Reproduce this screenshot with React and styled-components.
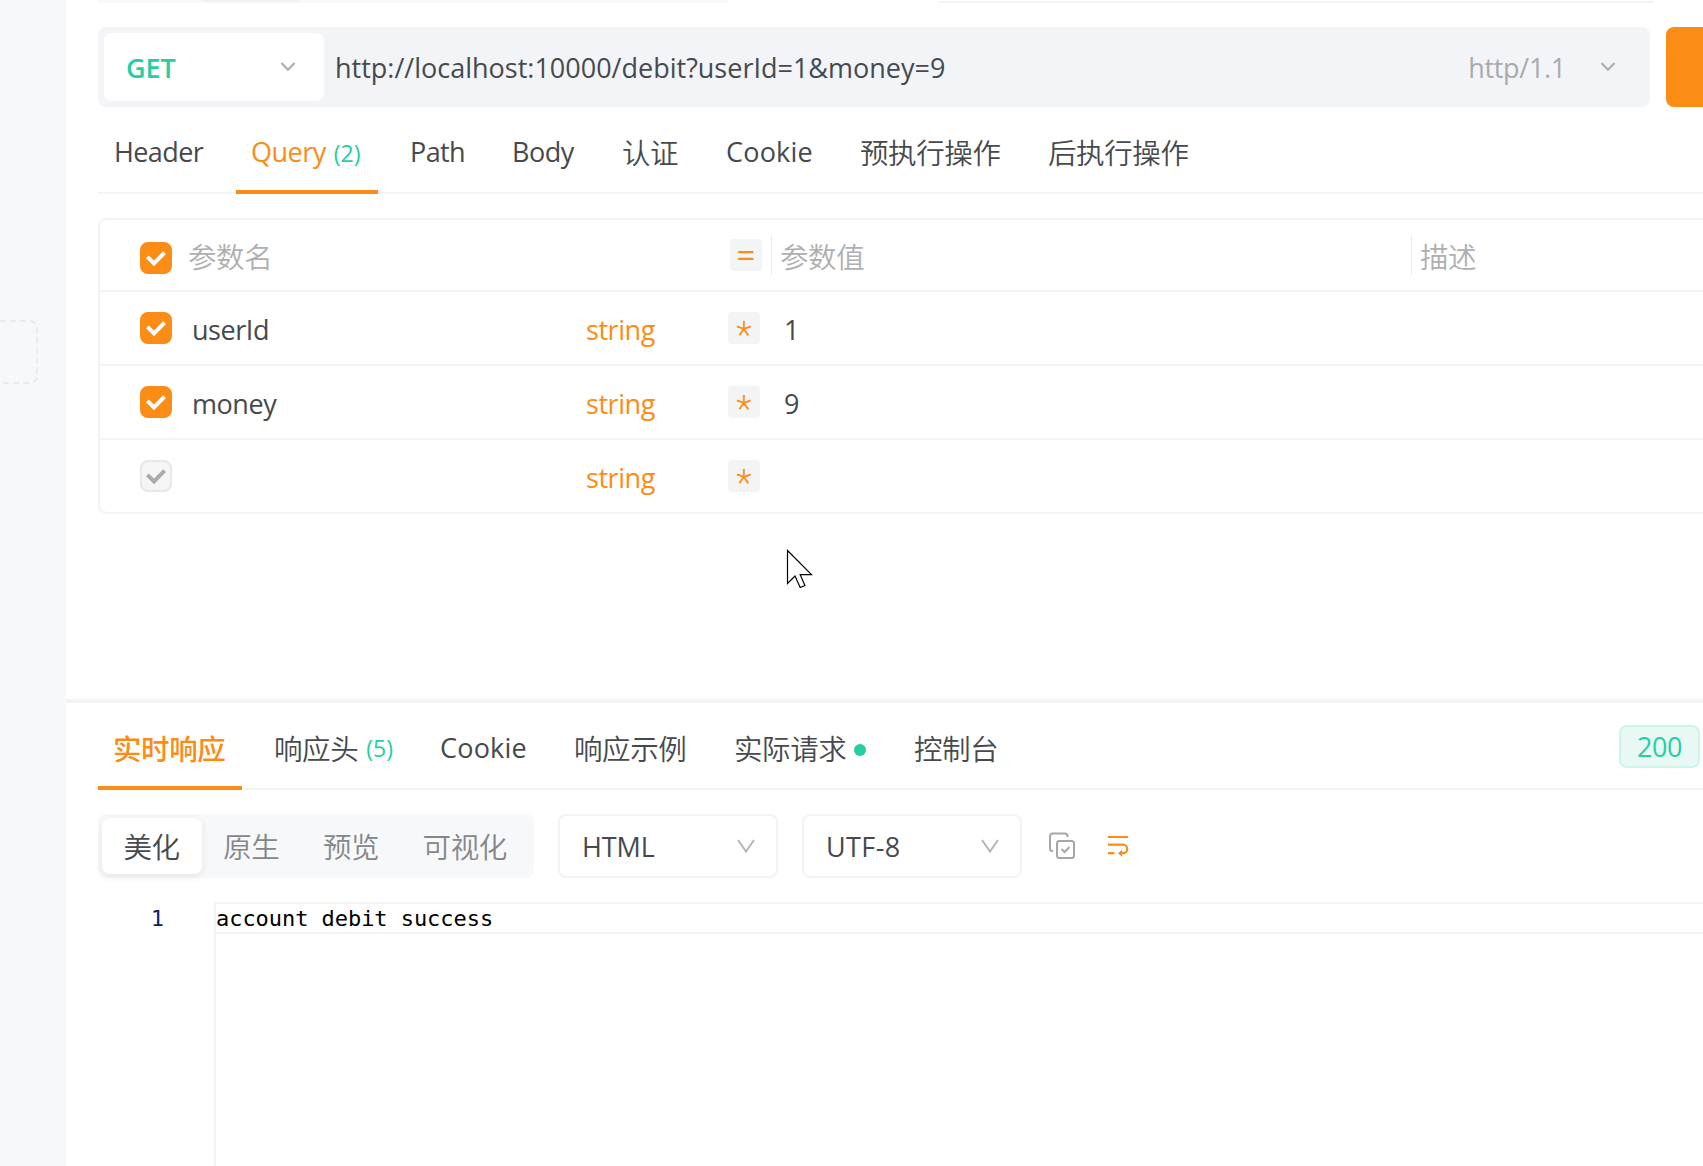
import styled, { createGlobalStyle, css } from "styled-components";

const orange = "#fb8c16";
const green = "#26cea4";
const line = "#f3f3f4";

const GlobalStyle = createGlobalStyle`
  * {
    box-sizing: border-box;
  }

  body {
    margin: 0;
    background: #ffffff;
    overflow: hidden;
  }
`;

const latin = css`
  font-family: "Open Sans", "Noto Sans", sans-serif;
  font-size: 27px;
  letter-spacing: -0.45px;
`;

const chinese = css`
  font-family: "Noto Sans CJK SC", sans-serif;
  font-weight: 350;
  font-size: 28.5px;
  letter-spacing: -0.4px;
`;

const Page = styled.div`
  display: flex;
  width: 1703px;
  height: 1166px;
  overflow: hidden;
  color: #464a4d;
  white-space: nowrap;
  ${latin}
`;

const Sidebar = styled.aside`
  flex: 0 0 66px;
  padding-top: 320px;
  background: #f7f8fa;
`;

const DropZone = styled.div`
  width: 38px;
  height: 64px;
  border: 2px dashed #e8eaef;
  border-left: none;
  border-radius: 0 8px 8px 0;
`;

const Main = styled.main`
  flex: 1;
  min-width: 0;
  display: flex;
  flex-direction: column;
`;

const RequestPane = styled.section`
  height: 699px;
  padding-left: 32px;
`;

const ResponsePane = styled.section`
  flex: 1;
  display: flex;
  flex-direction: column;
  padding-left: 32px;
  border-top: 4px solid #f3f3f4;
`;

const TopStrip = styled.div`
  display: flex;
  height: 27px;
`;

const StripTabs = styled.div`
  width: 631px;
  height: 3px;
  padding-left: 106px;
  background: #f7f8fa;
  border-radius: 0 0 8px 8px;
`;

const StripActive = styled.div`
  width: 94px;
  height: 1px;
  background: #eeeff1;
  box-shadow: 0 0 3px #e6e7e9;
`;

const StripInput = styled.div`
  width: 715px;
  height: 3px;
  margin-left: 210px;
  border-bottom: 2px solid ${line};
`;

const UrlRow = styled.div`
  display: flex;
  gap: 16px;
  height: 80px;
`;

const UrlBar = styled.div`
  flex: 0 0 1552px;
  display: flex;
  align-items: center;
  padding: 6px 34px 6px 6px;
  background: #f2f4f8;
  border-radius: 8px;
`;

const MethodSelect = styled.div`
  display: flex;
  align-items: center;
  justify-content: space-between;
  width: 220px;
  height: 68px;
  padding: 0 28px 0 22px;
  background: #ffffff;
  border-radius: 8px;
  color: ${green};
  font-weight: 600;
  letter-spacing: -0.1px;
`;

const Url = styled.div`
  flex: 1;
  padding-left: 11px;
  letter-spacing: 0;
`;

const Protocol = styled.div`
  display: flex;
  align-items: center;
  gap: 34px;
  color: #a9abad;
  letter-spacing: -0.3px;
`;

const SendButton = styled.div`
  flex: 1;
  background: ${orange};
  border-radius: 8px 0 0 8px;
`;

const TabBar = styled.div`
  display: flex;
  gap: 16px;
  height: 87px;
  border-bottom: 2px solid ${line};
`;

const Tab = styled.div`
  display: flex;
  align-items: center;
  gap: 8px;
  width: ${(props) => props.$width}px;
  height: 87px;
  padding: ${(props) => (props.$cjk ? "5px" : "6px")} 0 0 16px;
  border-bottom: 4px solid ${(props) => (props.$active ? orange : "transparent")};
  color: ${(props) => (props.$active ? orange : "inherit")};
  ${(props) => props.$cjk && chinese}
  ${(props) =>
    props.$spacing !== undefined &&
    css`
      letter-spacing: ${props.$spacing}px;
    `}
  ${(props) =>
    props.$active &&
    css`
      padding-left: 15px;
      font-weight: 500;
    `}
`;

const Count = styled.span`
  ${latin}
  padding-top: 2px;
  color: ${green};
  font-size: 23px;
  font-weight: 400;
  letter-spacing: 0;
`;

const Dot = styled.span`
  width: 12px;
  height: 12px;
  margin-top: 6px;
  border-radius: 50%;
  background: ${green};
`;

const Table = styled.div`
  width: 1640px;
  margin-top: 24px;
  border: 2px solid ${line};
  border-bottom: none;
  border-radius: 8px;
`;

const HeadRow = styled.div`
  display: grid;
  grid-template-columns: 48px 542px 41px 640px 1fr;
  align-items: center;
  height: 72px;
  padding-left: 40px;
  border-bottom: 2px solid ${line};
  color: #adafb0;
  ${chinese}
`;

const HeadCell = styled.div`
  height: 40px;
  padding-left: ${(props) => (props.$divided ? "8px" : "0")};
  border-left: ${(props) => (props.$divided ? `1px solid #ececee` : "none")};
  line-height: 42px;
`;

const Row = styled.div`
  display: grid;
  grid-template-columns: 52px 394px 142px 56px 1fr;
  align-items: center;
  height: 74px;
  padding-left: 40px;
  border-bottom: 2px solid ${line};

  &:last-child {
    border-radius: 0 0 8px 8px;
  }
`;

const Cell = styled.div`
  padding-top: 2px;
  color: ${(props) => (props.$type ? orange : "inherit")};
`;

const Checkbox = styled.div`
  display: flex;
  align-items: center;
  justify-content: center;
  width: 32px;
  height: 32px;
  margin-top: ${(props) => (props.$head ? "6px" : "0")};
  border: 2px solid ${(props) => (props.$disabled ? "#e8e8e9" : orange)};
  border-radius: 8px;
  background: ${(props) => (props.$disabled ? "#f5f5f5" : orange)};
  color: ${(props) => (props.$disabled ? "#a9abad" : "#ffffff")};
`;

const Mark = styled.div`
  width: 32px;
  height: 32px;
  border-radius: 4px;
  background: #f3f4f6;
  color: ${orange};
  font-family: ${(props) =>
    props.$equal ? `"Open Sans", sans-serif` : `Roboto, sans-serif`};
  font-size: ${(props) => (props.$equal ? "33px" : "36px")};
  font-weight: ${(props) => (props.$equal ? 500 : 300)};
  line-height: ${(props) => (props.$equal ? "31px" : "46px")};
  letter-spacing: 0;
  text-align: center;
`;

const Status = styled.div`
  width: 81px;
  height: 43px;
  margin: 22px 0 0 auto;
  border: 2px solid #cdf4e8;
  border-radius: 8px;
  background: #e8f9f5;
  color: ${green};
  line-height: 39px;
  text-align: center;
`;

const ResponseTabBar = styled(TabBar)`
  padding-right: 3px;
`;

const Toolbar = styled.div`
  display: flex;
  align-items: center;
  height: 64px;
  margin-top: 24px;
`;

const Segmented = styled.div`
  display: flex;
  width: 436px;
  height: 64px;
  padding: 4px;
  background: #f7f8fa;
  border-radius: 8px;
  ${chinese}
`;

const Segment = styled.div`
  height: 56px;
  padding: 0 22px 0 21.5px;
  border-radius: 8px;
  color: ${(props) => (props.$active ? "#464a4d" : "#84878a")};
  line-height: 56px;
  ${(props) =>
    props.$active &&
    css`
      background: #ffffff;
      box-shadow: 0 3px 8px rgba(0, 0, 0, 0.08);
    `}
`;

const Select = styled.div`
  display: flex;
  align-items: center;
  justify-content: space-between;
  width: 220px;
  height: 64px;
  margin-left: 24px;
  padding: 0 21px 0 22px;
  border: 2px solid ${line};
  border-radius: 8px;
  letter-spacing: ${(props) => props.$spacing}px;
`;

const Tools = styled.div`
  display: flex;
  gap: 30px;
  padding-left: 26px;
`;

const Editor = styled.div`
  flex: 1;
  display: flex;
  margin-top: 24px;
  font-family: "DejaVu Sans Mono", monospace;
  font-size: 22px;
  letter-spacing: -0.05px;
  line-height: 30px;
`;

const Gutter = styled.div`
  width: 118px;
  padding-right: 50px;
  border-right: 2px solid ${line};
  color: #0b216f;
  line-height: 33px;
  text-align: right;
`;

const CodeLine = styled.div`
  flex: 1;
  height: 32px;
  border: solid ${line};
  border-width: 2px 0;
  color: #000000;
`;

const Pointer = styled.svg`
  position: absolute;
  left: 786px;
  top: 549px;
`;

const CheckMark = () => (
  <svg width="20" height="16" viewBox="0 0 20 16" fill="none">
    <path d="M1.4 6.8L8 13.4L18.6 2.6" stroke="currentColor" strokeWidth="4" />
  </svg>
);

const Chevron = () => (
  <svg width="16" height="12" viewBox="0 0 16 12" fill="none">
    <path d="M1.5 2L8 8.7L14.5 2" stroke="#adafb1" strokeWidth="2.2" />
  </svg>
);

const SelectArrow = () => (
  <svg width="18" height="16" viewBox="0 0 18 16" fill="none">
    <path d="M1 2L9 13.5L17 2" stroke="#b4b5b7" strokeWidth="2" />
  </svg>
);

const CopyIcon = () => (
  <svg width="28" height="28" viewBox="0 0 28 28" fill="none" stroke="#a5a6aa" strokeWidth="2">
    <path d="M19.5 5V4A2.5 2.5 0 0 0 17 1.5H4.5A2.5 2.5 0 0 0 2 4V16.5A2.5 2.5 0 0 0 4.5 19H5" />
    <rect x="9" y="9" width="17" height="17" rx="2.5" />
    <path d="M13.5 17L16.5 20L21.5 15" />
  </svg>
);

const WrapIcon = () => (
  <svg width="24" height="28" viewBox="0 0 24 28" fill="none" stroke={orange} strokeWidth="2.2">
    <path d="M2 5H22M2 12.7H17A4.2 4.2 0 0 1 17 21.2H14M2 21.2H8.3" />
    <path d="M12 21.2L16 17.7V24.7Z" fill={orange} stroke="none" />
  </svg>
);

const requestTabs = [
  { label: "Header", width: 122, spacing: -0.6 },
  { label: "Query", width: 142, spacing: -0.5, count: 2, active: true },
  { label: "Path", width: 86, spacing: -0.6 },
  { label: "Body", width: 94 },
  { label: "认证", width: 88, cjk: true },
  { label: "Cookie", width: 118, spacing: 0.2 },
  { label: "预执行操作", width: 172, cjk: true },
  { label: "后执行操作", width: 172, cjk: true },
];

const responseTabs = [
  { label: "实时响应", width: 144, cjk: true, active: true },
  { label: "响应头", width: 150, cjk: true, count: 5 },
  { label: "Cookie", width: 118, spacing: 0.2 },
  { label: "响应示例", width: 144, cjk: true },
  { label: "实际请求", width: 164, cjk: true, dot: true },
  { label: "控制台", width: 116, cjk: true },
];

const params = [
  { name: "userId", value: "1" },
  { name: "money", value: "9" },
  { name: "", value: "" },
];

const Tabs = ({ items }) =>
  items.map((tab) => (
    <Tab
      key={tab.label}
      $width={tab.width}
      $spacing={tab.spacing}
      $cjk={tab.cjk}
      $active={tab.active}
    >
      <span>{tab.label}</span>
      {tab.count && <Count>({tab.count})</Count>}
      {tab.dot && <Dot />}
    </Tab>
  ));

const Request = () => {
  return (
    <RequestPane>
      <TopStrip>
        <StripTabs>
          <StripActive />
        </StripTabs>
        <StripInput />
      </TopStrip>
      <UrlRow>
        <UrlBar>
          <MethodSelect>
            GET
            <Chevron />
          </MethodSelect>
          <Url>http://localhost:10000/debit?userId=1&amp;money=9</Url>
          <Protocol>
            http/1.1
            <Chevron />
          </Protocol>
        </UrlBar>
        <SendButton />
      </UrlRow>
      <TabBar>
        <Tabs items={requestTabs} />
      </TabBar>
      <Table>
        <HeadRow>
          <Checkbox $head>
            <CheckMark />
          </Checkbox>
          <HeadCell>参数名</HeadCell>
          <Mark $equal>=</Mark>
          <HeadCell $divided>参数值</HeadCell>
          <HeadCell $divided>描述</HeadCell>
        </HeadRow>
        {params.map((param, index) => (
          <Row key={index}>
            <Checkbox $disabled={!param.name}>
              <CheckMark />
            </Checkbox>
            <Cell>{param.name}</Cell>
            <Cell $type>string</Cell>
            <Mark>*</Mark>
            <Cell>{param.value}</Cell>
          </Row>
        ))}
      </Table>
    </RequestPane>
  );
};

const Response = () => {
  return (
    <ResponsePane>
      <ResponseTabBar>
        <Tabs items={responseTabs} />
        <Status>200</Status>
      </ResponseTabBar>
      <Toolbar>
        <Segmented>
          <Segment $active>美化</Segment>
          <Segment>原生</Segment>
          <Segment>预览</Segment>
          <Segment>可视化</Segment>
        </Segmented>
        <Select $spacing={-0.1}>
          HTML
          <SelectArrow />
        </Select>
        <Select $spacing={0.4}>
          UTF-8
          <SelectArrow />
        </Select>
        <Tools>
          <CopyIcon />
          <WrapIcon />
        </Tools>
      </Toolbar>
      <Editor>
        <Gutter>1</Gutter>
        <CodeLine>account debit success</CodeLine>
      </Editor>
    </ResponsePane>
  );
};

const App = () => {
  return (
    <>
      <GlobalStyle />
      <Page>
        <Sidebar>
          <DropZone />
        </Sidebar>
        <Main>
          <Request />
          <Response />
        </Main>
      </Page>
      <Pointer width="28" height="42" viewBox="-1.5 -1.5 28 42" fill="#ffffff" stroke="#000000" strokeWidth="1.2">
        <path d="M0 0V33L7.5 25.5L12.7 37L17.4 35L12.7 24.2H24Z" />
      </Pointer>
    </>
  );
};

export default App;
